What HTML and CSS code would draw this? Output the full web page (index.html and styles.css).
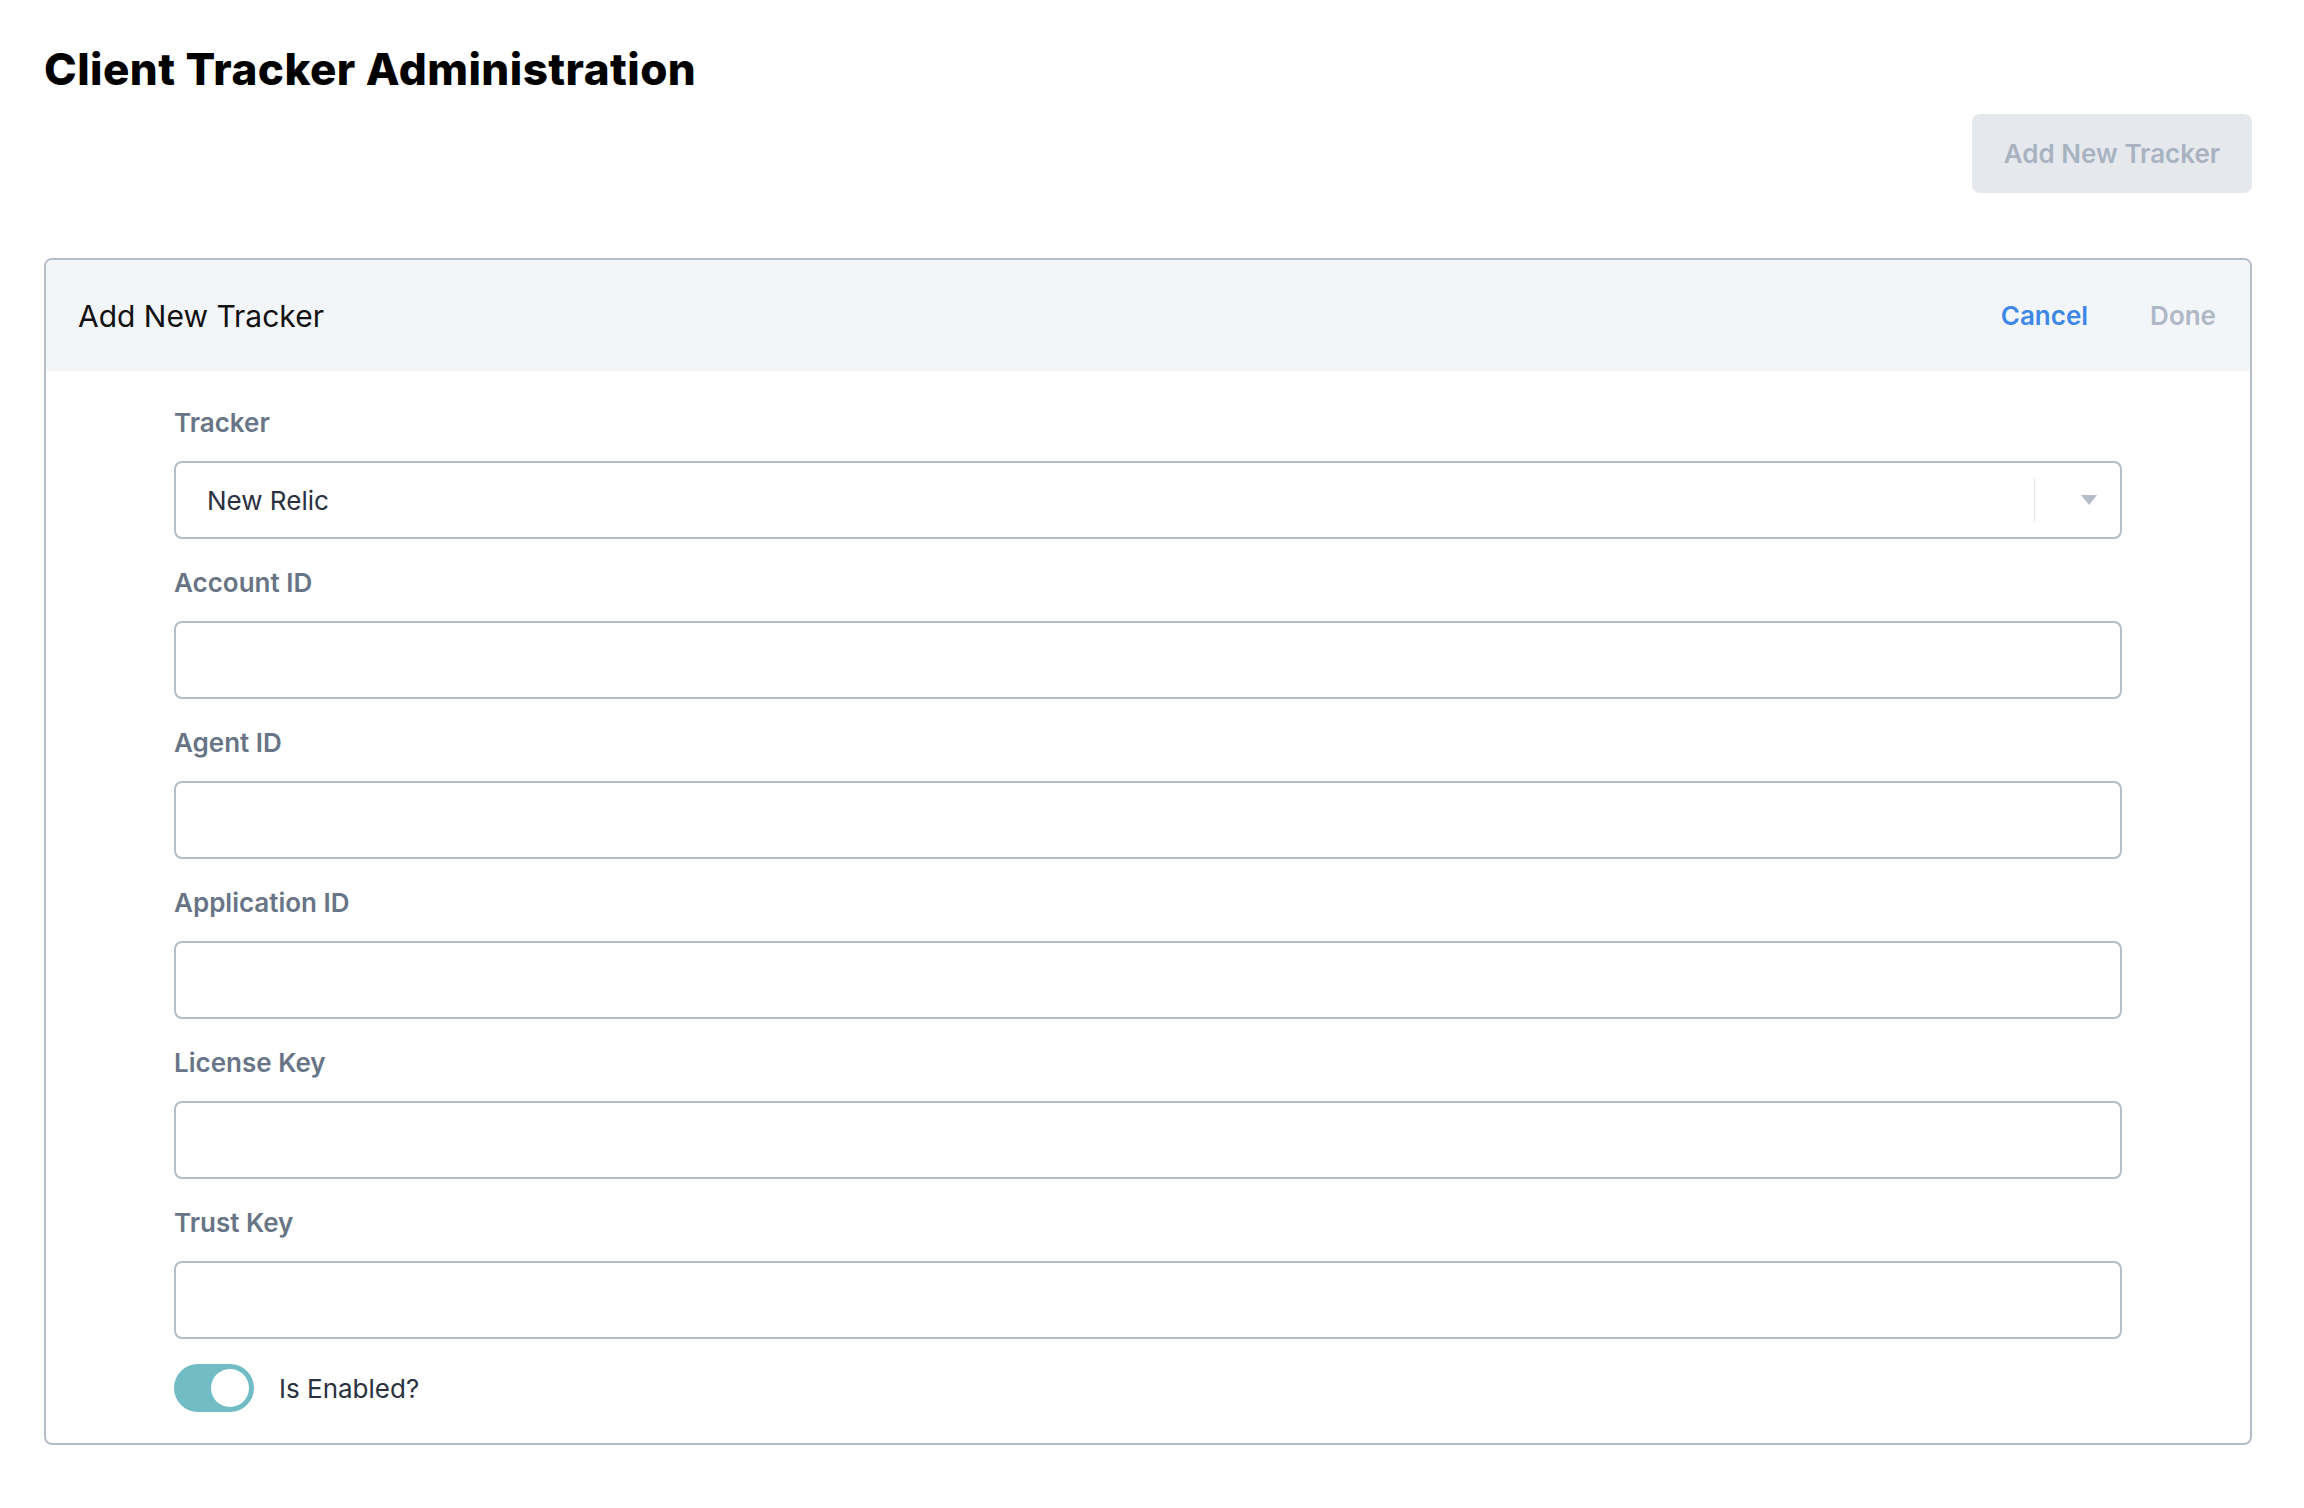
FILE: index.html
```html
<!DOCTYPE html>
<html lang="en">
<head>
<meta charset="utf-8">
<title>Client Tracker Administration</title>
<link rel="stylesheet" href="styles.css">
</head>
<body>
<div class="page">
  <h1 class="page-title">Client Tracker Administration</h1>
  <div class="toolbar">
    <button class="btn-add" type="button">Add New Tracker</button>
  </div>
  <section class="card">
    <header class="card-header">
      <h2 class="card-title">Add New Tracker</h2>
      <div class="card-actions">
        <span class="action cancel">Cancel</span>
        <span class="action done">Done</span>
      </div>
    </header>
    <div class="form">
      <div class="field">
        <label class="field-label">Tracker</label>
        <div class="select">
          <span class="select-value">New Relic</span>
          <span class="select-sep"></span>
          <span class="select-indicator">
            <svg width="16" height="10" viewBox="0 0 16 10"><path d="M0 0 H16 L8 10 Z" fill="#b3bcc7"/></svg>
          </span>
        </div>
      </div>
      <div class="field">
        <label class="field-label">Account ID</label>
        <input class="input" type="text">
      </div>
      <div class="field">
        <label class="field-label">Agent ID</label>
        <input class="input" type="text">
      </div>
      <div class="field">
        <label class="field-label">Application ID</label>
        <input class="input" type="text">
      </div>
      <div class="field">
        <label class="field-label">License Key</label>
        <input class="input" type="text">
      </div>
      <div class="field field-last">
        <label class="field-label">Trust Key</label>
        <input class="input" type="text">
      </div>
      <div class="toggle-row">
        <span class="toggle"><span class="knob"></span></span>
        <span class="toggle-label">Is Enabled?</span>
      </div>
    </div>
  </section>
</div>
</body>
</html>
```
FILE: styles.css
```css
* { box-sizing: border-box; }
html, body { margin: 0; padding: 0; background: #fff; }
body { font-family: Inter, "Noto Sans", sans-serif; color: #1f2430; }

.page {
  width: 2208px;
  margin-left: 44px;
  padding-top: 43px;
}

.page-title {
  margin: 0;
  font-size: 44px;
  line-height: 53px;
  font-weight: 800;
  color: #000;
  letter-spacing: 0.45px;
}

.toolbar {
  display: flex;
  justify-content: flex-end;
  margin-top: 18px;
}

.btn-add {
  width: 280px;
  height: 79px;
  border: none;
  border-radius: 8px;
  background: #e5e9ee;
  color: #a9b3c0;
  font-family: Inter, sans-serif;
  font-size: 26px;
  font-weight: 600;
  padding: 0;
}

.card {
  margin-top: 65px;
  border: 2px solid #b5bdc9;
  border-radius: 8px;
}

.card-header {
  height: 111px;
  padding: 0 34px 0 32px;
  background: #f3f6f9;
  border-radius: 6px 6px 0 0;
  display: flex;
  align-items: center;
  justify-content: space-between;
}

.card-title {
  margin: 0;
  font-size: 30px;
  font-weight: 400;
  color: #111;
}

.card-actions {
  display: flex;
  gap: 62px;
}

.action {
  font-size: 26px;
  font-weight: 600;
}
.cancel { color: #3d87e6; }
.done { color: #afb8c5; }

.form {
  padding: 34px 128px 31px;
}

.field {
  margin-bottom: 26px;
}
.field-last { margin-bottom: 25px; }

.field-label {
  display: block;
  font-size: 26px;
  line-height: 36px;
  font-weight: 600;
  color: #687587;
  margin-bottom: 20px;
}

.input, .select {
  display: flex;
  width: 100%;
  height: 78px;
  border: 2px solid #b5bdc9;
  border-radius: 8px;
  background: #fff;
  font-family: Inter, sans-serif;
  font-size: 26px;
  padding: 0 31px;
  margin: 0;
  outline: none;
}

.select {
  align-items: center;
  padding: 0;
}
.select-value {
  flex: 1;
  padding-left: 31px;
  color: #2a3140;
}
.select-sep {
  width: 1px;
  height: 44px;
  background: #e3e7eb;
}
.select-indicator {
  display: flex;
  align-items: center;
  padding: 0 23px 0 46px;
}

.toggle-row {
  display: flex;
  align-items: center;
  gap: 25px;
}

.toggle {
  position: relative;
  width: 80px;
  height: 48px;
  border-radius: 24px;
  background: #72bdc5;
}
.knob {
  position: absolute;
  right: 5px;
  top: 5px;
  width: 38px;
  height: 38px;
  border-radius: 50%;
  background: #fff;
}

.toggle-label {
  font-size: 26px;
  color: #2a3140;
}
```
